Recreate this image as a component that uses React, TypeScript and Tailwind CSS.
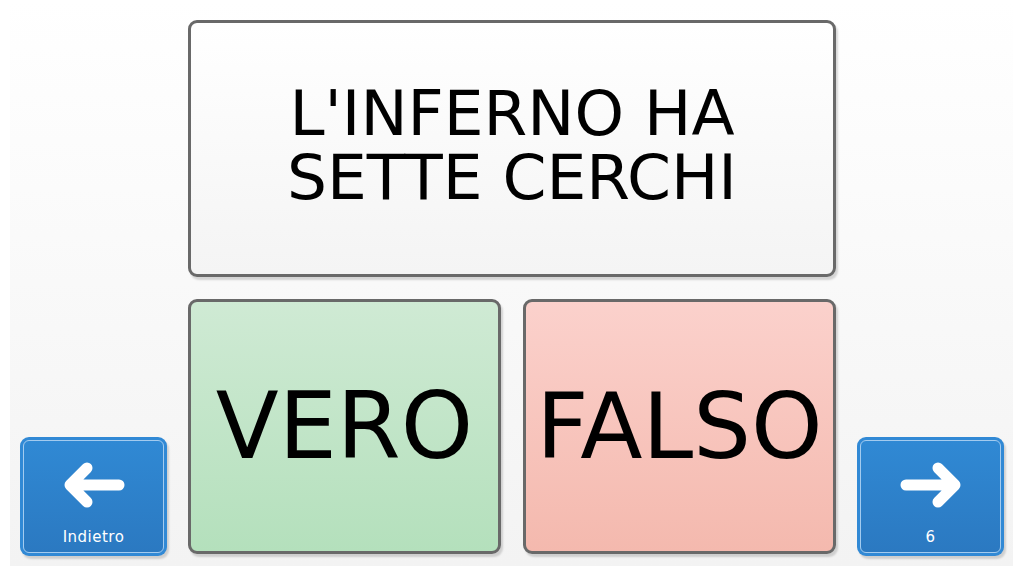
import React from "react";

const font = { fontFamily: '"DejaVu Sans", Verdana, sans-serif' };

function NavButton({ dir, label }: { dir: "left" | "right"; label: string }) {
  return (
    <div className="w-[147px] h-[119px] rounded-[9px] bg-[#3189d5] p-[3px] shadow-[2px_3px_2px_rgba(0,0,0,0.15)]">
      <div className="w-full h-full rounded-[6px] border border-[#a3cbef] bg-gradient-to-b from-[#3089d4] to-[#2b79c1] flex flex-col items-center pt-[20px]">
        <svg width="64" height="48" viewBox="0 0 64 48" fill="none">
          {dir === "left" ? (
            <path d="M8 24 H57 M8 24 L25 7 M8 24 L25 41" stroke="white" strokeWidth="11" strokeLinecap="round" strokeLinejoin="round" />
          ) : (
            <path d="M56 24 H7 M56 24 L39 7 M56 24 L39 41" stroke="white" strokeWidth="11" strokeLinecap="round" strokeLinejoin="round" />
          )}
        </svg>
        <div className="mt-[20px] text-white text-[15px] leading-[17px] tracking-[0.5px]" style={font}>
          {label}
        </div>
      </div>
    </div>
  );
}

export default function App() {
  return (
    <div className="w-[1024px] h-[576px] bg-white overflow-hidden" style={font}>
      <div className="ml-[10px] w-[1003px] h-[566px] bg-gradient-to-b from-[#ffffff] to-[#f3f3f3] flex flex-row px-[10px] pt-[20px] pb-[10px]">
        <div className="w-[147px] flex flex-col justify-end">
          <NavButton dir="left" label="Indietro" />
        </div>
        <div className="w-[648px] mx-[21px] flex flex-col">
          <div className="h-[257px] rounded-[9px] border-[3px] border-[#696969] bg-gradient-to-b from-[#ffffff] to-[#f4f4f4] shadow-[2px_3px_2px_rgba(0,0,0,0.15)] flex items-center justify-center pb-[6px]">
            <div className="text-center text-black text-[63px] leading-[64px]">
              <div>L'INFERNO HA</div>
              <div>SETTE CERCHI</div>
            </div>
          </div>
          <div className="mt-[22px] h-[255px] flex flex-row gap-[22px]">
            <div className="w-[313px] h-full rounded-[9px] border-[3px] border-[#696969] bg-gradient-to-b from-[#cfead4] to-[#b4e0bc] shadow-[2px_3px_2px_rgba(0,0,0,0.15)] flex items-center justify-center">
              <span className="text-black text-[92px] leading-none">VERO</span>
            </div>
            <div className="w-[313px] h-full rounded-[9px] border-[3px] border-[#696969] bg-gradient-to-b from-[#fbd1cc] to-[#f4b9ae] shadow-[2px_3px_2px_rgba(0,0,0,0.15)] flex items-center justify-center">
              <span className="text-black text-[91px] leading-none">FALSO</span>
            </div>
          </div>
        </div>
        <div className="w-[147px] flex flex-col justify-end">
          <NavButton dir="right" label="6" />
        </div>
      </div>
    </div>
  );
}
